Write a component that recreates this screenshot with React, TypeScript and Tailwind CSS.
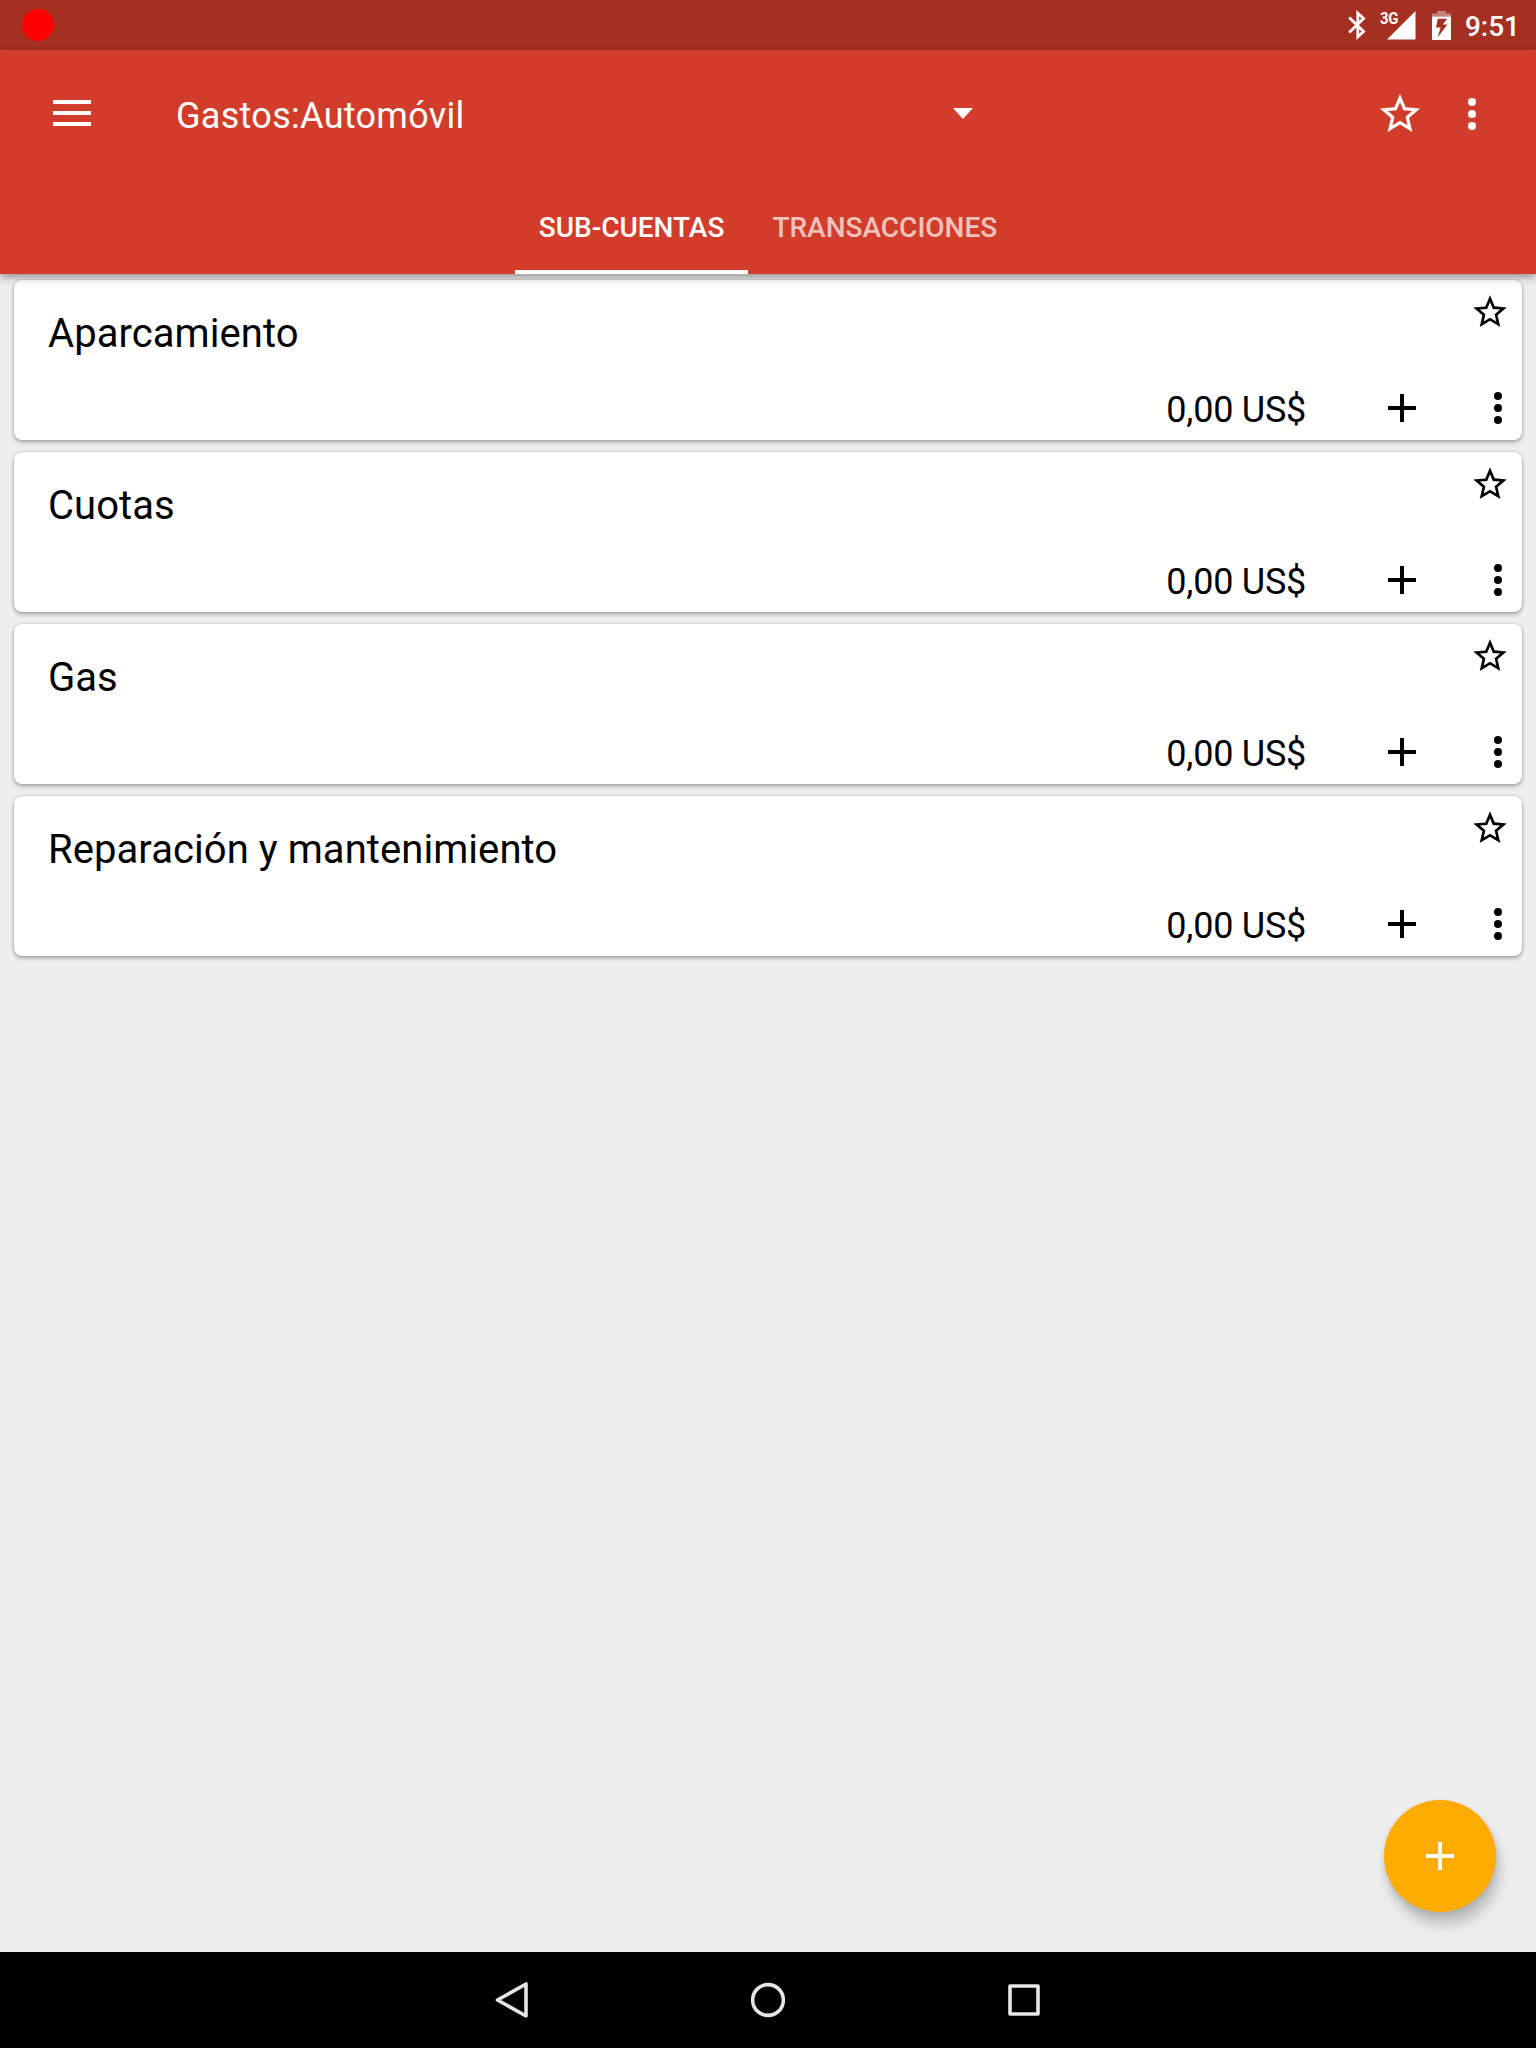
import React from "react";

const STAR =
  "M22 9.24l-7.19-.62L12 2 9.19 8.63 2 9.24l5.46 4.73L5.82 21 12 17.27 18.18 21l-1.63-7.03L22 9.24zM12 15.4l-3.76 2.27 1-4.28-3.32-2.88 4.38-.38L12 6.1l1.71 4.04 4.38.38-3.32 2.88 1 4.28L12 15.4z";

const accounts = [
  { name: "Aparcamiento", balance: "0,00 US$" },
  { name: "Cuotas", balance: "0,00 US$" },
  { name: "Gas", balance: "0,00 US$" },
  { name: "Reparación y mantenimiento", balance: "0,00 US$" },
];

function Star({ className }: { className: string }) {
  return (
    <svg viewBox="0 0 24 24" className={className} fill="currentColor">
      <path d={STAR} />
    </svg>
  );
}

function Dots() {
  return (
    <svg viewBox="0 0 24 24" className="size-12 shrink-0" fill="currentColor">
      <circle cx="12" cy="6" r="2" />
      <circle cx="12" cy="12" r="2" />
      <circle cx="12" cy="18" r="2" />
    </svg>
  );
}

function Plus() {
  return (
    <svg viewBox="0 0 24 24" className="size-12 shrink-0" fill="currentColor">
      <path d="M19 13h-6v6h-2v-6H5v-2h6V5h2v6h6v2z" />
    </svg>
  );
}

function StatusBar() {
  return (
    <div className="flex h-[50px] items-center bg-[#a53021] pr-4 pl-[22px] text-white">
      <div className="size-8 rounded-full bg-[#ff0000]" />
      <svg viewBox="0 0 18 30" className="ml-auto h-[30px] w-[18px]" fill="none" stroke="currentColor" strokeWidth="2.8">
        <path d="M1.2 7.400L15.600 21.400L9.800 26.800V3.200L15.600 8.600L1.200 22.600" />
      </svg>
      <div className="relative ml-[14px] h-[30px] w-[36px]">
        <span className="absolute top-0 left-0 origin-left scale-x-[0.88] text-[17px] leading-[17px] font-bold tracking-[-0.5px]">3G</span>
        <svg viewBox="0 0 29 29" className="absolute top-[1px] left-[7px] size-[29px]" fill="currentColor">
          <path d="M0 28.500L28.500 0V28.500z" />
        </svg>
      </div>
      <svg viewBox="0 0 19 29" className="ml-[16px] h-[29px] w-[19px]" fill="currentColor">
        <path d="M5 0h9v2.500h5v3H0v-3h5z" opacity="0.4" />
        <path fillRule="evenodd" d="M0 5.500h19V29H0zM5.800 7.800L4 16.600h4.600l-3 9.800L15.400 13.600h-4.600L15.200 7.800z" />
      </svg>
      <span className="mt-[3px] ml-[14px] text-[28px] leading-none font-medium">9:51</span>
    </div>
  );
}

function Header() {
  return (
    <header className="relative z-10 bg-[#d13d2a] text-white shadow-[0_3px_8px_rgba(0,0,0,0.4)]">
      <div className="flex h-32 items-center">
        <svg viewBox="0 0 38 26" className="-mt-0.5 ml-[53px] h-[26px] w-[38px]" fill="currentColor">
          <path d="M0 0h38v4H0zM0 11h38v4H0zM0 22h38v4H0z" />
        </svg>
        <div className="ml-[85px] flex w-[797px] items-center justify-between">
          <span className="pt-1 text-[36px] leading-[42px] tracking-[0.3px]">Gastos:Automóvil</span>
          <svg viewBox="0 0 20 11" className="-mt-0.5 h-[11px] w-5" fill="currentColor">
            <path d="M0 0h20L10 11z" />
          </svg>
        </div>
        <Star className="ml-auto size-12" />
        <div className="mr-10 ml-6 flex">
          <Dots />
        </div>
      </div>
      <nav className="flex h-24 justify-center text-[28px] font-medium">
        <div className="flex items-center border-b-4 border-white px-6 pt-2">SUB-CUENTAS</div>
        <div className="flex items-center border-b-4 border-transparent px-6 pt-2 text-white/70">TRANSACCIONES</div>
      </nav>
    </header>
  );
}

function AccountCard({ name, balance }: { name: string; balance: string }) {
  return (
    <article className="flex h-40 flex-col rounded-lg bg-white shadow-[0_2px_4px_rgba(0,0,0,0.32),0_0_2px_rgba(0,0,0,0.2)]">
      <div className="flex h-[104px] items-start justify-between pl-[34px]">
        <h2 className="mt-[30px] text-[40px] leading-[47px] tracking-[0.06px]">{name}</h2>
        <Star className="mt-3 mr-3 size-10" />
      </div>
      <div className="flex h-12 items-center justify-end">
        <span className="mt-[3px] text-[36px] leading-[42px] tracking-[-0.25px]">{balance}</span>
        <div className="ml-[72px] flex gap-12">
          <Plus />
          <Dots />
        </div>
      </div>
    </article>
  );
}

export default function App() {
  return (
    <div className="relative flex h-[2048px] w-[1536px] flex-col overflow-hidden bg-[#eeeeee] font-['Roboto',sans-serif] text-black">
      <StatusBar />
      <Header />
      <main className="flex flex-1 flex-col gap-3 px-[14px] pt-1.5">
        {accounts.map((a) => (
          <AccountCard key={a.name} {...a} />
        ))}
      </main>
      <button className="absolute right-10 bottom-[136px] flex size-28 items-center justify-center rounded-full bg-[#ffab00] text-white shadow-[4px_13px_13px_rgba(0,0,0,0.2),0_2px_6px_rgba(0,0,0,0.12)]">
        <Plus />
      </button>
      <footer className="flex h-24 items-center justify-center gap-[208px] bg-black text-[#e6e6e6]">
        <svg viewBox="0 0 48 48" className="size-12" fill="none" stroke="currentColor" strokeWidth="3.6" strokeLinejoin="round">
          <path d="M9.500 24L38 8V40z" />
        </svg>
        <svg viewBox="0 0 48 48" className="size-12" fill="none" stroke="currentColor" strokeWidth="3.600">
          <circle cx="24" cy="24" r="15.400" />
        </svg>
        <svg viewBox="0 0 48 48" className="size-12" fill="none" stroke="currentColor" strokeWidth="3.600" strokeLinejoin="round">
          <rect x="10" y="10" width="28" height="28" />
        </svg>
      </footer>
    </div>
  );
}
